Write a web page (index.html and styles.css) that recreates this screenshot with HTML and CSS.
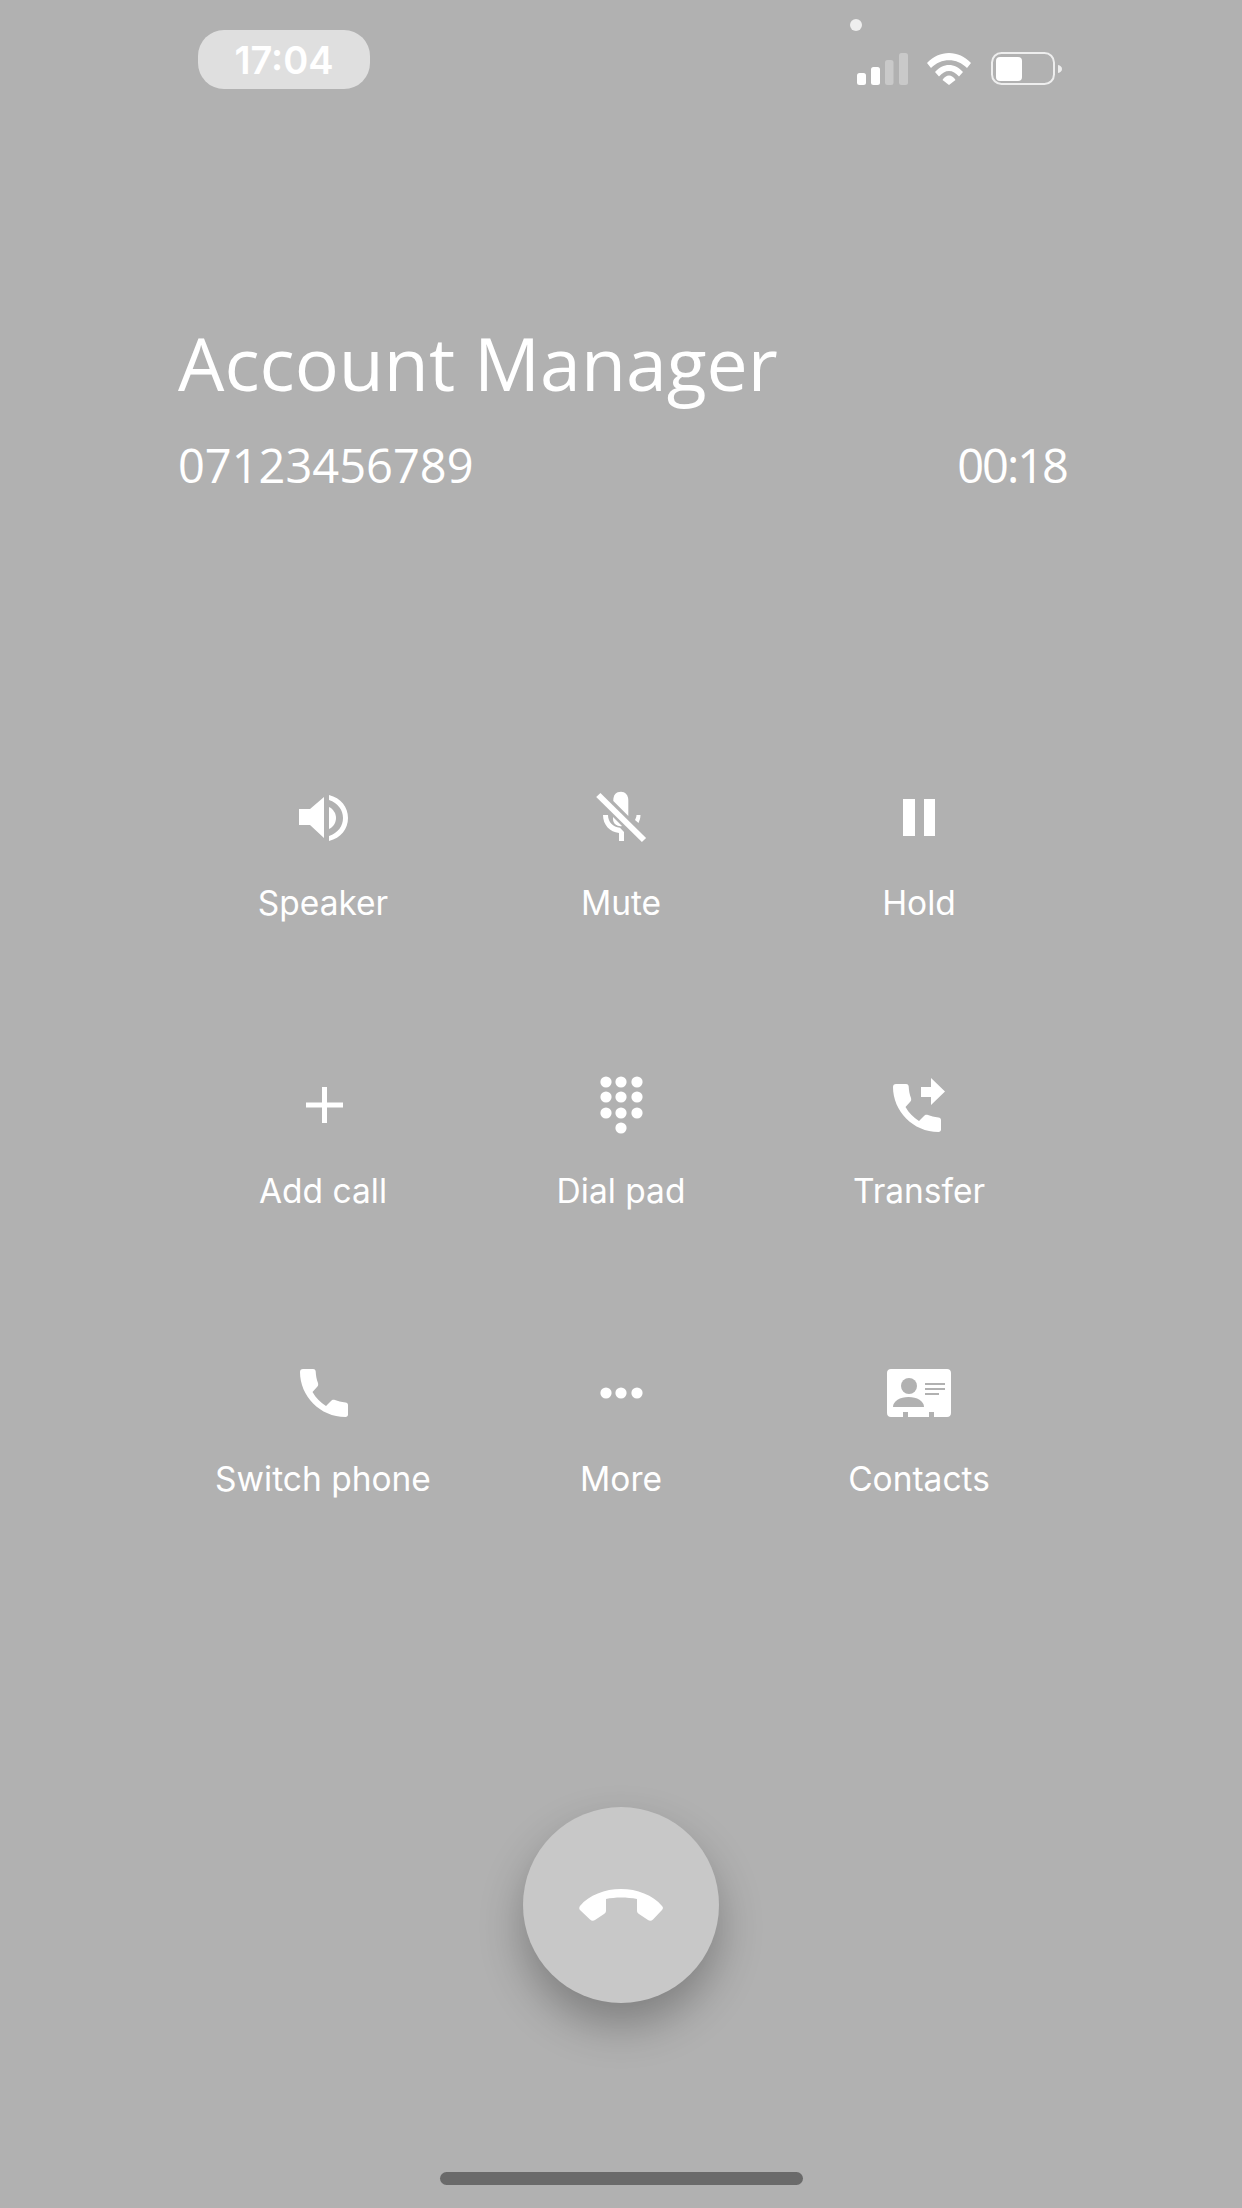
FILE: index.html
```html
<!DOCTYPE html>
<html lang="en">
<head>
    <meta charset="UTF-8">
    <meta name="viewport" content="width=device-width, initial-scale=1.0">
    <title>Call</title>
    <link rel="stylesheet" href="styles.css">
</head>
<body>
    <svg class="defs" width="0" height="0">
        <symbol id="handset" viewBox="0 0 48 48">
            <path d="M3 0H13C15 0 15.5 1 15.7 2.5C16 7 16.5 10 18 14C18.5 16 18 17 17 18L12.5 23C16 29 20 33 26 37L31 32C32 31 33 30.5 35 31C38 32 41 33 45.5 33.5C47 33.7 48 34.5 48 36V45.5C48 47 47 48 45.5 48C20 48 0 27 0 3C0 1 1 0 3 0Z"/>
        </symbol>
    </svg>

    <div class="screen">
        <!-- Status bar -->
        <div class="status-bar">
            <div class="time-pill">17:04</div>
            <svg class="status-icons" width="205" height="33" viewBox="0 0 205 33">
                <rect x="0" y="21" width="9" height="12" rx="2.5" fill="#fff"/>
                <rect x="14" y="15" width="9" height="18" rx="2.5" fill="#fff"/>
                <rect x="28" y="8" width="8.5" height="25" rx="2.5" fill="#c9c9c9"/>
                <rect x="42" y="1" width="9" height="32" rx="2.5" fill="#c9c9c9"/>
                <path d="M70 11C82 -2.5 102 -2.5 114 11L110 16C100 5.5 84 5.5 74 16Z" fill="#fff"/>
                <path d="M78 20C86 10.5 98 10.5 106 20L102 24.5C96 17 88 17 82 24.5Z" fill="#fff"/>
                <path d="M85.5 28C89 22 95 22 98.5 28L92 33Z" fill="#fff"/>
                <rect x="135" y="1" width="62" height="31" rx="9.5" fill="none" stroke="#eee" stroke-width="2"/>
                <rect x="139" y="5" width="26" height="24" rx="4" fill="#fff"/>
                <path d="M201 13C203.5 13.5 205 15 205 17C205 19 203.5 20.5 201 21Z" fill="#eee"/>
            </svg>
            <span class="privacy-dot"></span>
        </div>

        <!-- Caller details -->
        <div class="caller">
            <div class="caller-name">Account Manager</div>
            <div class="caller-line">
                <span>07123456789</span>
                <span class="call-timer">00:18</span>
            </div>
        </div>

        <!-- Call actions -->
        <div class="actions">
            <div class="action">
                <svg class="action-icon" viewBox="0 0 80 80">
                    <path d="M16 31H27L41 19V60L27 47H16Z"/>
                    <path d="M46 17C58 20 65 29 65 40C65 51 58 60 46 63V58C55 55 60 48 60 40C60 32 55 25 46 22Z"/>
                    <path d="M46 29C50 31 53 35 53 40C53 45 50 49 46 51Z"/>
                </svg>
                <div class="action-label">Speaker</div>
            </div>
            <div class="action">
                <svg class="action-icon" viewBox="0 0 80 80">
                    <path d="M32.3 22C32.3 17 35 13.7 40 13.7C44 13.7 47.3 17 47.3 22V38L32.3 23Z"/>
                    <path d="M32 39L41 48C37 49 32 46 32 41Z"/>
                    <path d="M22 37H27C27 44 32 49 39 49.8L43 54V63H38V55C29 54 22 47 22 37Z"/>
                    <path d="M55.5 37H59.5C59.5 40 58.5 42.5 57.5 45L54 42C55 40 55.5 38.5 55.5 37Z"/>
                    <path d="M19.4 14.9L65.1 59.9L60.9 64.1L15.2 19.1Z"/>
                </svg>
                <div class="action-label">Mute</div>
            </div>
            <div class="action">
                <svg class="action-icon" viewBox="0 0 80 80">
                    <rect x="24" y="21" width="12" height="37"/>
                    <rect x="45" y="21" width="11" height="37"/>
                </svg>
                <div class="action-label">Hold</div>
            </div>

            <div class="action">
                <svg class="action-icon" viewBox="0 0 80 80">
                    <rect x="23" y="36.5" width="37" height="5"/>
                    <rect x="39" y="21" width="5" height="36"/>
                </svg>
                <div class="action-label">Add call</div>
            </div>
            <div class="action">
                <svg class="action-icon" viewBox="0 0 80 80">
                    <circle cx="25" cy="16" r="5.6"/><circle cx="40" cy="16" r="5.6"/><circle cx="56" cy="16" r="5.6"/>
                    <circle cx="25" cy="31" r="5.6"/><circle cx="40" cy="31" r="5.6"/><circle cx="56" cy="31" r="5.6"/>
                    <circle cx="25" cy="47" r="5.6"/><circle cx="40" cy="47" r="5.6"/><circle cx="56" cy="47" r="5.6"/>
                    <circle cx="40" cy="62" r="5.6"/>
                </svg>
                <div class="action-label">Dial pad</div>
            </div>
            <div class="action">
                <svg class="action-icon" viewBox="0 0 80 80">
                    <use href="#handset" x="14" y="18" width="48" height="48"/>
                    <path d="M42 21H52V12L66 25.5L52 39V31H42Z"/>
                </svg>
                <div class="action-label">Transfer</div>
            </div>

            <div class="action">
                <svg class="action-icon" viewBox="0 0 80 80">
                    <use href="#handset" x="17" y="15" width="48" height="48"/>
                </svg>
                <div class="action-label">Switch phone</div>
            </div>
            <div class="action">
                <svg class="action-icon" viewBox="0 0 80 80">
                    <circle cx="25" cy="39" r="5.6"/><circle cx="40" cy="39" r="5.6"/><circle cx="56" cy="39" r="5.6"/>
                </svg>
                <div class="action-label">More</div>
            </div>
            <div class="action">
                <svg class="action-icon" viewBox="0 0 80 80">
                    <path d="M12 15H68C70.5 15 72 16.5 72 19V59C72 61.5 70.5 63 68 63H55V58H50V63H29V58H24V63H12C9.5 63 8 61.5 8 59V19C8 16.5 9.5 15 12 15Z"/>
                    <circle class="cut" cx="30" cy="32" r="8"/>
                    <path class="cut" d="M14 53C14 47 21 43 29.5 43C38 43 45 47 45 53Z"/>
                    <rect class="cut" x="46" y="29" width="20" height="2"/>
                    <rect class="cut" x="46" y="34" width="20" height="2"/>
                    <rect class="cut" x="46" y="39" width="14" height="2"/>
                </svg>
                <div class="action-label">Contacts</div>
            </div>
        </div>

        <!-- End call -->
        <div class="end-call">
            <svg width="84" height="32" viewBox="0 0 84 32">
                <path d="M1 17C10 6 26 0 42 0C58 0 74 6 83 17C84.5 18.5 84 20 83 21L74 30.5C72.5 32 70.5 32 69 31L60 25C58.5 24 58 23 58 21.5V10C48 8 36 8 27 10V21.5C27 23 26.5 24 25 25L16 31C14.5 32 12.5 32 11 30.5L1 21C0 20 0 18.5 1 17Z" fill="#fff"/>
            </svg>
        </div>

        <div class="home-bar"></div>
    </div>
</body>
</html>
```

FILE: styles.css
```css
body {
    margin: 0;
    background-color: #b1b1b1;
    color: #fff;
    font-family: Inter, "Liberation Sans", sans-serif;
}

.defs {
    display: block;
    height: 0;
}

.screen {
    display: flex;
    flex-direction: column;
    height: 2208px;
    overflow: hidden;
}

/* Status bar */
.status-bar {
    position: relative;
    display: flex;
    justify-content: space-between;
    align-items: flex-start;
    height: 59px;
    padding: 30px 180px 0 198px;
}

.time-pill {
    display: flex;
    justify-content: center;
    align-items: center;
    width: 172px;
    height: 59px;
    border-radius: 26px;
    background-color: #dfdfdf;
    font-size: 38px;
    font-weight: 600;
}

.status-icons {
    margin-top: 22px;
}

.privacy-dot {
    position: absolute;
    top: 19px;
    left: 850px;
    width: 12px;
    height: 12px;
    border-radius: 50%;
    background-color: #eee;
}

/* Caller details */
.caller {
    margin-top: 224px;
    padding: 0 175px 0 178px;
    font-family: "Open Sans", sans-serif;
}

.caller-name {
    font-size: 73.4px;
    line-height: 100px;
}

.caller-line {
    display: flex;
    justify-content: space-between;
    margin-top: 22px;
    font-size: 47px;
    line-height: 60px;
}

.call-timer {
    letter-spacing: -2px;
}

/* Call actions */
.actions {
    display: grid;
    grid-template-columns: repeat(3, 298px);
    row-gap: 141px;
    margin-top: 283px;
    margin-left: 174px;
}

.action {
    display: flex;
    flex-direction: column;
    align-items: center;
}

.action-icon {
    width: 80px;
    height: 80px;
    fill: #fff;
}

.action-icon .cut {
    fill: #b1b1b1;
}

.action-label {
    margin-top: 23px;
    font-size: 33.5px;
    line-height: 44px;
    white-space: nowrap;
}

/* End call */
.end-call {
    display: flex;
    justify-content: center;
    align-items: center;
    align-self: center;
    width: 196px;
    height: 196px;
    margin-top: 306px;
    border-radius: 50%;
    background-color: #c8c8c8;
    box-shadow: 0 22px 44px rgba(0, 0, 0, 0.28);
}

.home-bar {
    align-self: center;
    width: 363px;
    height: 13px;
    margin-top: 169px;
    border-radius: 7px;
    background-color: #6a6a6a;
}
```
